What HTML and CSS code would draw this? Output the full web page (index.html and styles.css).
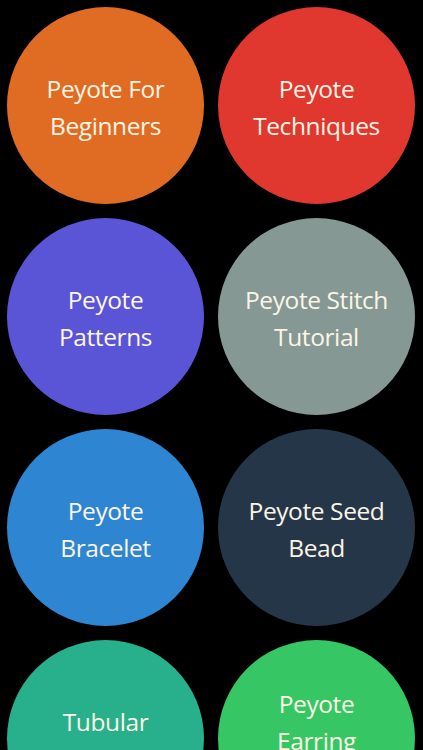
FILE: index.html
```html
<!DOCTYPE html>
<html lang="en">
<head>
<meta charset="utf-8">
<title>Peyote</title>
<link rel="stylesheet" href="styles.css">
</head>
<body>
<main class="grid">
  <a class="tile orange"><span class="label">Peyote For<br>Beginners</span></a>
  <a class="tile red"><span class="label">Peyote<br>Techniques</span></a>
  <a class="tile purple"><span class="label">Peyote<br>Patterns</span></a>
  <a class="tile gray"><span class="label">Peyote Stitch<br>Tutorial</span></a>
  <a class="tile blue"><span class="label">Peyote<br>Bracelet</span></a>
  <a class="tile navy"><span class="label">Peyote Seed<br>Bead</span></a>
  <a class="tile teal"><span class="label">Tubular<br>Peyote</span></a>
  <a class="tile green"><span class="label">Peyote<br>Earring<br>Patterns</span></a>
</main>
</body>
</html>
```
FILE: styles.css
```css
html, body {
  margin: 0;
  padding: 0;
  background: #000;
  overflow: hidden;
}
body {
  font-family: "Open Sans", "Noto Sans", sans-serif;
}
.grid {
  display: grid;
  grid-template-columns: 197px 197px;
  column-gap: 14px;
  row-gap: 14px;
  padding: 7px 8px 0 7px;
}
.tile {
  width: 197px;
  height: 197px;
  border-radius: 50%;
  display: flex;
  align-items: center;
  justify-content: center;
  text-align: center;
  color: #fcf5e6;
  text-decoration: none;
}
.label {
  font-size: 24.5px;
  line-height: 37px;
  font-weight: 400;
  letter-spacing: -0.4px;
  padding-top: 3px;
}
.orange { background: #e06c24; }
.red { background: #e0372f; }
.purple { background: #5a55d6; }
.gray { background: #859894; }
.blue { background: #2e86d2; }
.navy { background: #263649; }
.teal { background: #27b08b; }
.green { background: #36c764; }
```
